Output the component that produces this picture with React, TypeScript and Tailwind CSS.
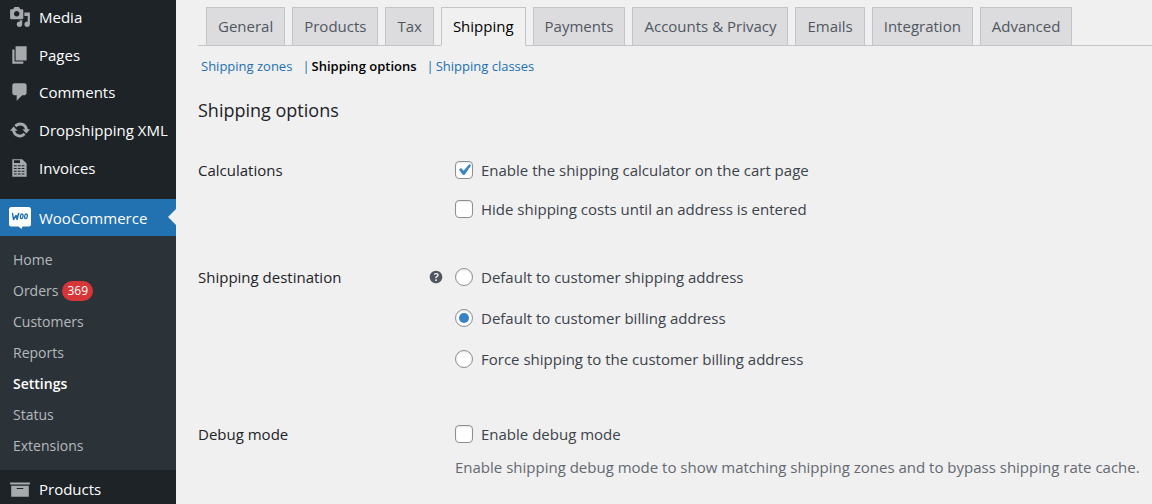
import React from 'react';
import clsx from 'clsx';

interface IIcon {
  className?: string;
}

interface IMenuItem {
  label: string;
  icon: React.FC<IIcon>;
}

interface IChoiceProps {
  id: string;
  type: 'checkbox' | 'radio';
  name: string;
  label: string;
  defaultChecked?: boolean;
}

const makeIcon = (d: string): React.FC<IIcon> => {
  const Icon: React.FC<IIcon> = ({ className }) => (
    <svg viewBox="0 0 20 20" fill="currentColor" className={className} aria-hidden="true">
      <path fillRule="evenodd" d={d} />
    </svg>
  );
  return Icon;
};

const MediaIcon = makeIcon(
  'M13 11V4c0-.55-.45-1-1-1h-1.67L9 1H5L3.67 3H2c-.55 0-1 .45-1 1v7c0 .55.45 1 1 1h10c.55 0 1-.45 1-1zM7 4.5c1.38 0 2.5 1.12 2.5 2.5S8.38 9.5 7 9.5 4.5 8.38 4.5 7 5.62 4.5 7 4.5zM14 6h5v10.5c0 1.38-1.12 2.5-2.5 2.5S14 17.88 14 16.5s1.12-2.5 2.5-2.5c.17 0 .34.02.5.05V9h-3V6zm-4 8.05V13h2v3.5c0 1.38-1.12 2.5-2.5 2.5S7 17.88 7 16.5 8.12 14 9.5 14c.17 0 .34.02.5.05z'
);
const PagesIcon = makeIcon('M6 15V2h10v13H6zm-1 1h8v2H3V5h2v11z');
const CommentsIcon = makeIcon(
  'M5 2h9c1.1 0 2 .9 2 2v7c0 1.1-.9 2-2 2h-2l-5 5v-5H5c-1.1 0-2-.9-2-2V4c0-1.1.9-2 2-2z'
);
const UpdateIcon = makeIcon(
  'M10.2 3.28c3.53 0 6.43 2.61 6.92 6h2.08l-3.5 4-3.5-4h2.32c-.45-1.97-2.21-3.45-4.32-3.45-1.45 0-2.73.71-3.54 1.78L4.95 5.66C6.23 4.2 8.11 3.28 10.2 3.28zm-.4 13.44c-3.52 0-6.43-2.61-6.92-6H.8l3.5-4c1.17 1.33 2.33 2.67 3.5 4H5.48c.45 1.97 2.21 3.45 4.32 3.45 1.45 0 2.73-.71 3.54-1.78l1.71 1.95c-1.28 1.46-3.15 2.38-5.25 2.38z'
);
const InvoiceIcon = makeIcon(
  'M3 2h9l4 4v12H3zM4.500 3v2.500h5.500V3zM4.500 7.500v1h2.500v-1zm3.500 0v1h2.500v-1zm3.500 0v1H14v-1zM4.500 10v1h2.500v-1zm3.500 0v1h2.500v-1zm3.500 0v1H14v-1zM4.500 12.500v1h2.500v-1zm3.500 0v1h2.500v-1zm3.500 0v1H14v-1zM4.500 15v1h2.500v-1zm3.500 0v1h2.500v-1zm3.500 0v1H14v-1z'
);
const ArchiveIcon = makeIcon('M19 4v2H1V4h18zM2 7h16v10H2V7zm11 3V9H7v1h6z');
const HelpIcon = makeIcon(
  'M17 10c0-3.87-3.14-7-7-7-3.87 0-7 3.13-7 7s3.13 7 7 7c3.86 0 7-3.13 7-7zm-6.3 1.48H9.14v-.43c0-.38.08-.7.24-.98s.46-.57.88-.89c.41-.29.68-.53.81-.71.14-.18.2-.39.2-.62 0-.25-.09-.44-.28-.58-.19-.13-.45-.19-.79-.19-.58 0-1.25.19-2 .57l-.64-1.28c.87-.49 1.8-.74 2.77-.74.81 0 1.45.2 1.92.58.48.39.71.91.71 1.55 0 .43-.09.8-.29 1.11-.19.32-.57.67-1.11 1.06-.38.28-.61.49-.71.63-.1.15-.15.34-.15.57v.35zm-1.47 2.74c-.18-.17-.27-.42-.27-.73 0-.33.08-.58.26-.75s.43-.25.77-.25c.32 0 .57.09.75.26s.27.42.27.74c0 .3-.09.55-.27.72-.18.18-.43.27-.75.27-.33 0-.58-.09-.76-.26z'
);

const WooIcon: React.FC<IIcon> = ({ className }) => (
  <svg viewBox="0 0 22 22" className={className} aria-hidden="true">
    <path
      fill="#fff"
      d="M2.500 0h17A2.500 2.500 0 0 1 22 2.500v15a2 2 0 0 1-2 2h-6.500L12.500 22l-3-2.500H2a2 2 0 0 1-2-2v-15A2.500 2.500 0 0 1 2.500 0z"
    />
    <g fill="none" stroke="#2271b1" strokeLinecap="round" strokeLinejoin="round">
      <path strokeWidth="1.500" d="M3.500 6.500l1 6 2.500-4 1.200 4c.2-2.500.7-4.500 1.600-6" />
      <ellipse cx="12.700" cy="9.300" rx="1.300" ry="2.300" strokeWidth="1.300" transform="rotate(12 12.700 9.300)" />
      <ellipse cx="17" cy="9.300" rx="1.300" ry="2.300" strokeWidth="1.300" transform="rotate(12 17 9.300)" />
    </g>
  </svg>
);

const menu: IMenuItem[] = [
  { label: 'Media', icon: MediaIcon },
  { label: 'Pages', icon: PagesIcon },
  { label: 'Comments', icon: CommentsIcon },
  { label: 'Dropshipping XML', icon: UpdateIcon },
  { label: 'Invoices', icon: InvoiceIcon },
];

const submenu = ['Home', 'Orders', 'Customers', 'Reports', 'Settings', 'Status', 'Extensions'];

const tabs = [
  'General',
  'Products',
  'Tax',
  'Shipping',
  'Payments',
  'Accounts & Privacy',
  'Emails',
  'Integration',
  'Advanced',
];

const MenuLink: React.FC<IMenuItem> = ({ label, icon: Icon }) => (
  <a href="#" className="flex flex-1 items-center gap-2 pl-[9px] text-white whitespace-nowrap">
    <Icon className="w-[22px] h-[22px] shrink-0 text-[#a7aaad]" />
    {label}
  </a>
);

const Sidebar: React.FC = () => (
  <aside className="w-44 shrink-0 bg-[#1d2327] text-[15px] leading-5">
    <nav>
      <div className="-mt-0.5 flex flex-col h-[189px]">
        {menu.map((item) => (
          <MenuLink key={item.label} {...item} />
        ))}
      </div>

      <a
        href="#"
        className="relative mt-3 flex items-center gap-2 h-[37px] pl-[9px] bg-[#2271b1] text-white"
      >
        <WooIcon className="w-[22px] h-[22px] shrink-0" />
        WooCommerce
        <span className="absolute right-0 top-[10px] border-y-8 border-r-8 border-y-transparent border-r-[#f0f0f1]" />
      </a>

      <ul className="bg-[#2c3338] pt-2 pb-[9px] text-sm">
        {submenu.map((label) => (
          <li key={label}>
            <a
              href="#"
              className={clsx(
                'flex items-center gap-1 h-[31px] pl-[13px]',
                label === 'Settings' ? 'font-semibold text-white' : 'text-[#b4b9be]'
              )}
            >
              {label}
              {label === 'Orders' && (
                <span className="rounded-full bg-[#d63638] px-[5px] text-xs leading-5 text-white">369</span>
              )}
            </a>
          </li>
        ))}
      </ul>

      <div className="flex h-[38px]">
        <MenuLink label="Products" icon={ArchiveIcon} />
      </div>
    </nav>
  </aside>
);

const Choice: React.FC<IChoiceProps> = ({ id, type, name, label, defaultChecked }) => (
  <div className="flex items-center gap-2 h-5">
    <span className="relative flex w-[18px] h-[18px] shrink-0">
      <input
        id={id}
        type={type}
        name={name}
        defaultChecked={defaultChecked}
        className={clsx(
          'peer appearance-none w-[18px] h-[18px] border border-[#8c8f94] bg-white shadow-[inset_0_1px_2px_rgba(0,0,0,0.1)]',
          type === 'radio' ? 'rounded-full' : 'rounded'
        )}
      />
      {type === 'radio' ? (
        <span className="absolute left-1 top-1 w-[10px] h-[10px] rounded-full bg-[#3582c4] opacity-0 pointer-events-none peer-checked:opacity-100" />
      ) : (
        <svg
          viewBox="0 0 20 20"
          className="absolute -left-0.5 -top-0.5 w-[22px] h-[22px] fill-[#3582c4] stroke-[#3582c4] opacity-0 pointer-events-none peer-checked:opacity-100"
          strokeWidth="0.5"
          aria-hidden="true"
        >
          <path d="M14.830 4.890l1.340.94-5.810 8.380H9.020L5.780 9.670l1.340-1.250 2.570 2.400z" />
        </svg>
      )}
    </span>
    <label htmlFor={id}>{label}</label>
  </div>
);

const Tabs: React.FC = () => (
  <nav className="flex gap-[7px] border-b border-[#c3c4c7] pt-[7px] pl-2">
    {tabs.map((tab) => (
      <a
        key={tab}
        href="#"
        className={clsx(
          '-mb-px h-[39px] border px-[11px] text-[15px] leading-[37px] font-medium whitespace-nowrap border-[#c3c4c7]',
          tab === 'Shipping' ? 'border-b-[#f0f0f1] bg-[#f0f0f1] text-black' : 'bg-[#dcdcde] text-[#50575e]'
        )}
      >
        {tab}
      </a>
    ))}
  </nav>
);

const rowTitle = 'w-[229px] shrink-0 text-[15px] leading-5 font-medium text-[#1d2327]';

const App: React.FC = () => {
  return (
    <div className="flex min-h-screen bg-[#f0f0f1] font-['Open_Sans','Noto_Sans',sans-serif] text-[#3c434a]">
      <Sidebar />

      <main className="flex-1 min-w-0 pl-[22px]">
        <Tabs />

        <ul className="flex gap-[10px] mt-[10px] pl-[3px] text-[13px] leading-5 text-[#2271b1]">
          <li>
            <a href="#">Shipping zones</a>
          </li>
          <li className="flex gap-0.5">
            |
            <a href="#" className="font-semibold text-black">
              Shipping options
            </a>
          </li>
          <li className="flex gap-0.5">
            |<a href="#">Shipping classes</a>
          </li>
        </ul>

        <h2 className="mt-5 text-lg leading-7 font-medium text-[#1d2327]">Shipping options</h2>

        <form className="text-[15px] leading-5">
          <section className="flex pt-9">
            <h3 className={rowTitle}>Calculations</h3>
            <div className="flex flex-col gap-[19px] pl-7">
              <Choice
                id="calculator"
                type="checkbox"
                name="calculator"
                label="Enable the shipping calculator on the cart page"
                defaultChecked
              />
              <Choice
                id="hide-costs"
                type="checkbox"
                name="hide-costs"
                label="Hide shipping costs until an address is entered"
              />
            </div>
          </section>

          <section className="flex pt-12">
            <h3 className={rowTitle}>Shipping destination</h3>
            <button type="button" aria-label="Help" className="w-7 h-5 text-[#50575e]">
              <HelpIcon className="w-[18px] h-[18px]" />
            </button>
            <div className="flex flex-col gap-[21px]">
              <Choice id="to-shipping" type="radio" name="destination" label="Default to customer shipping address" />
              <Choice
                id="to-billing"
                type="radio"
                name="destination"
                label="Default to customer billing address"
                defaultChecked
              />
              <Choice
                id="force-billing"
                type="radio"
                name="destination"
                label="Force shipping to the customer billing address"
              />
            </div>
          </section>

          <section className="flex pt-[55px]">
            <h3 className={rowTitle}>Debug mode</h3>
            <div className="pl-7">
              <Choice id="debug" type="checkbox" name="debug" label="Enable debug mode" />
              <p className="mt-[13px] text-[#646970]">
                Enable shipping debug mode to show matching shipping zones and to bypass shipping rate cache.
              </p>
            </div>
          </section>
        </form>
      </main>
    </div>
  );
};

export default App;
